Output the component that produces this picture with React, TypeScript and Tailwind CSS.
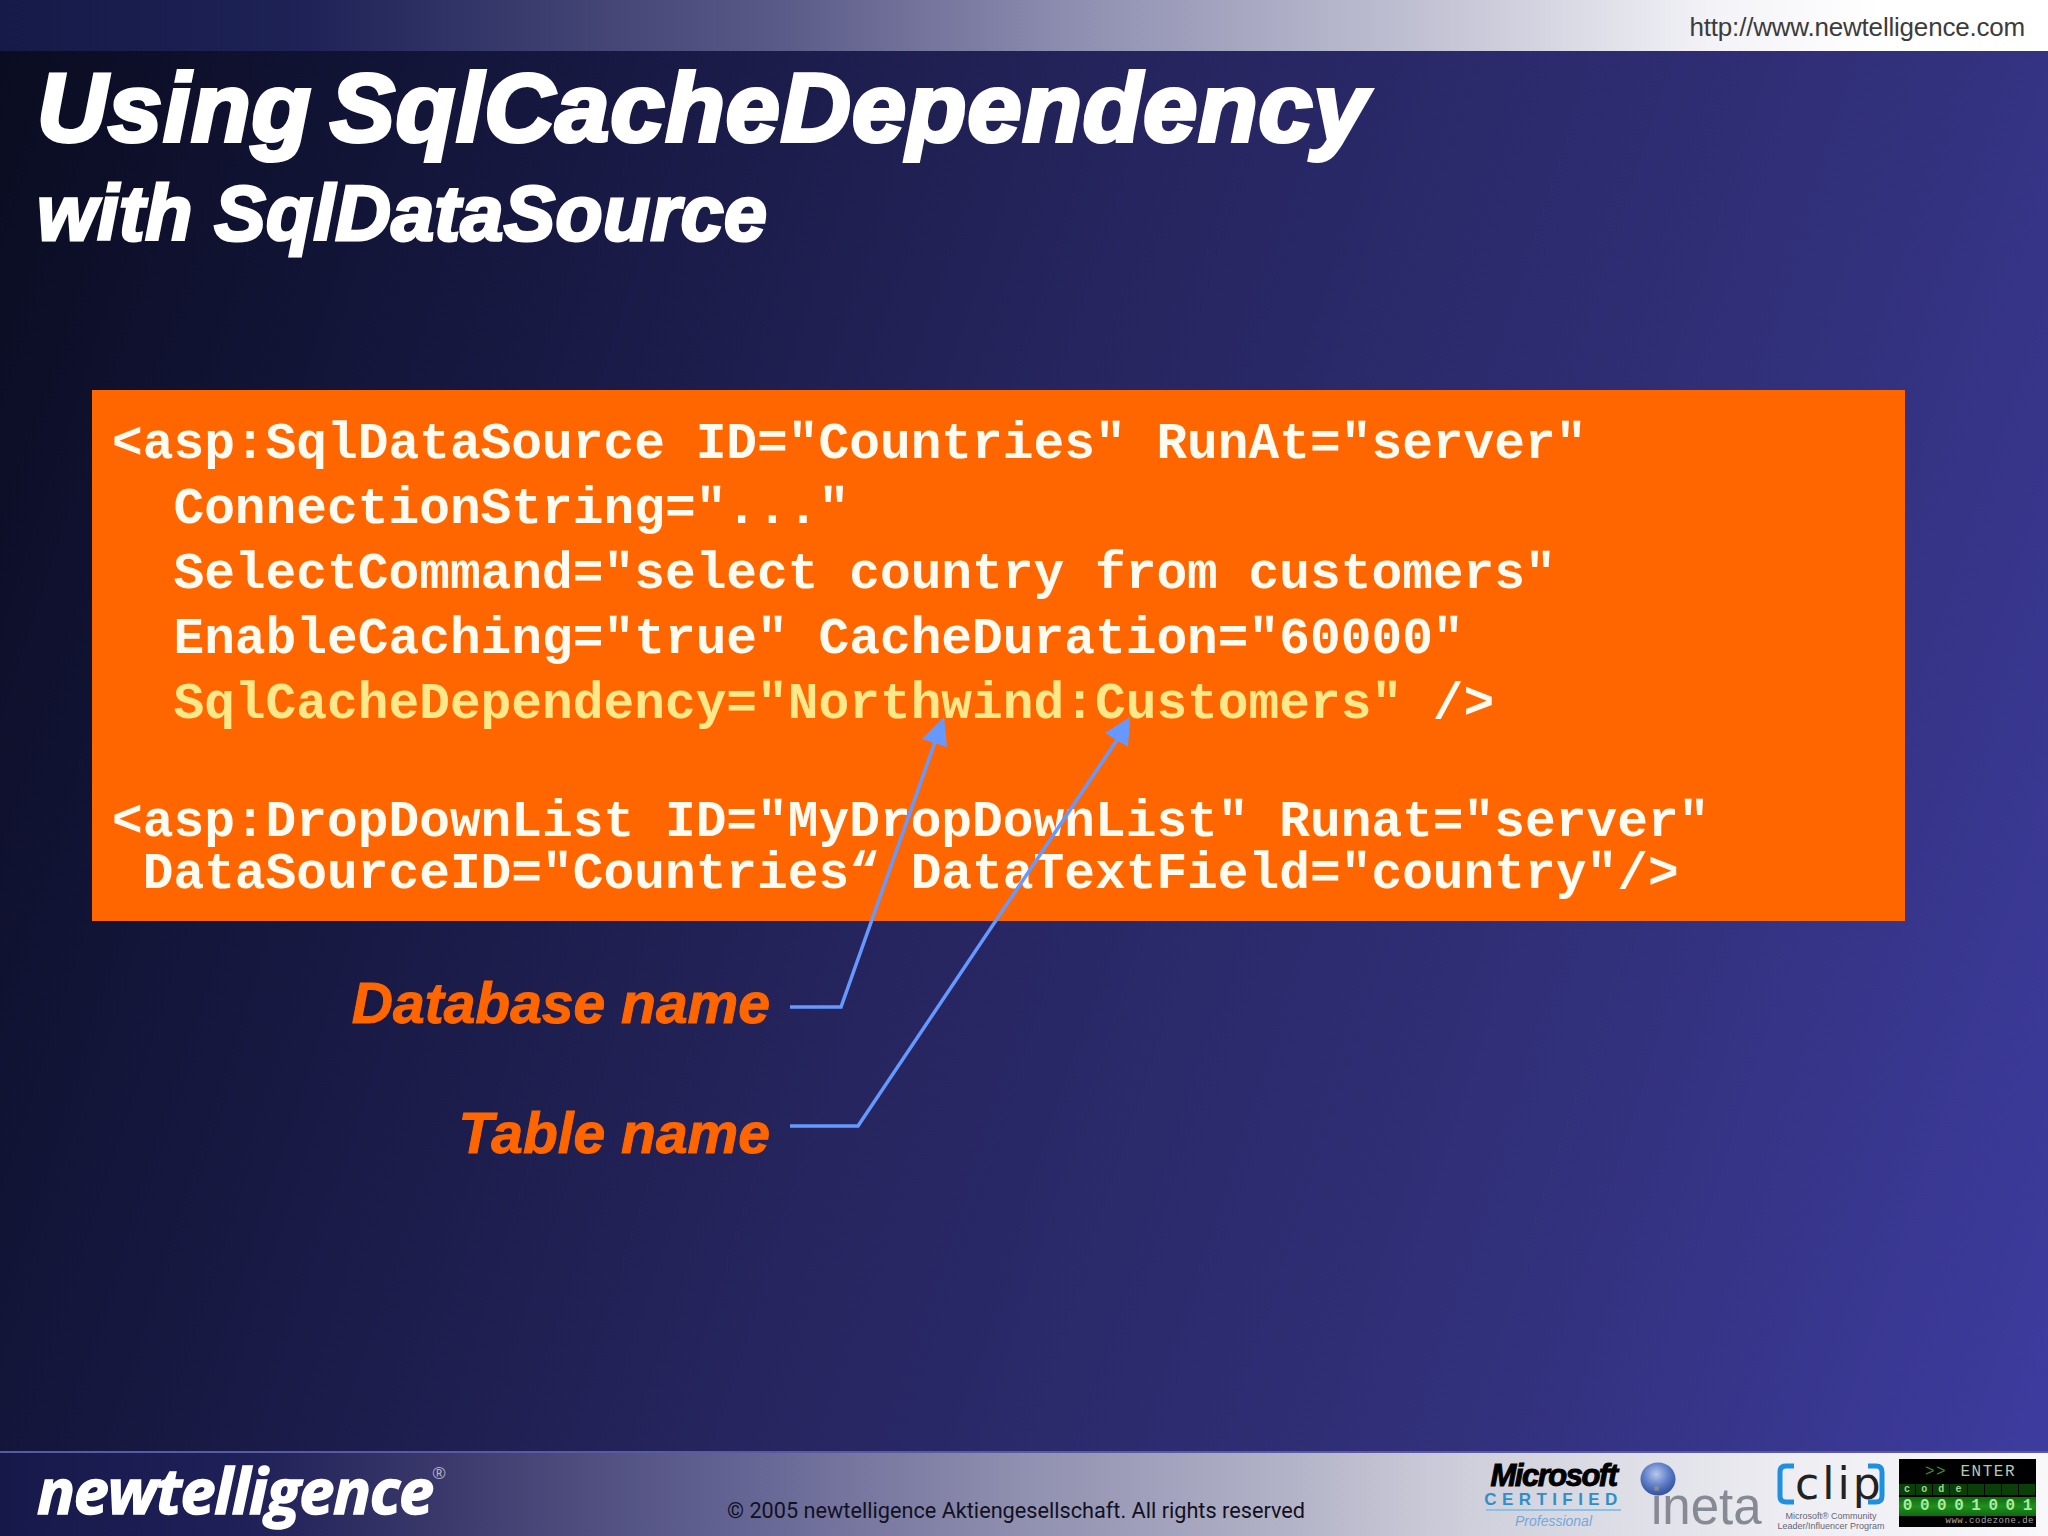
import React from "react";

const sans = "font-['Liberation_Sans',Arial,sans-serif]";

const codeTop = [
  { text: '<asp:SqlDataSource ID="Countries" RunAt="server"', cls: "text-[#fffbf0]" },
  { text: '  ConnectionString="..."', cls: "text-[#fffbf0]" },
  { text: '  SelectCommand="select country from customers"', cls: "text-[#fffbf0]" },
  { text: '  EnableCaching="true" CacheDuration="60000"', cls: "text-[#fffbf0]" },
];

const bits = ["0", "0", "0", "0", "1", "0", "0", "1"];
const code = ["c", "o", "d", "e", "", "", "", ""];

const CodeZone = () => (
  <div className="w-[137px] h-[68px] bg-black flex flex-col font-['Liberation_Mono',monospace] mt-[6px] ml-[13px]">
    <div className="h-[25px] flex items-center justify-between pl-[26px] pr-[20px] text-[16px] leading-none tracking-[1.5px] text-[#b8c8b0]">
      <span className="text-[#3f8f2a]">&gt;&gt;</span>
      <span>ENTER</span>
    </div>
    <div className="grid grid-cols-8 h-[11px] bg-[#0a3f0a] text-[10px] leading-[11px] font-bold text-center text-[#9ad890]">
      {code.map((c, i) => (
        <span key={i} className="border-r border-black">{c}</span>
      ))}
    </div>
    <div className="grid grid-cols-8 h-[19px] mt-[2px] bg-[linear-gradient(180deg,#0f6a0f,#1f8f1f_50%,#0f6a0f)] text-[16px] leading-[19px] font-bold text-center text-[#a8eca0]">
      {bits.map((c, i) => (
        <span key={i}>{c}</span>
      ))}
    </div>
    <div className="flex-1 flex items-center justify-end pr-[2px] text-[9px] leading-none tracking-[0.5px] text-[#a8a8a8]">www.codezone.de</div>
  </div>
);

const App = () => {
  return (
    <div className={`relative w-[2048px] h-[1536px] overflow-hidden flex flex-col ${sans} bg-[linear-gradient(108deg,#0a0c20_0%,#14163c_20%,#26255f_47%,#31307a_75%,#3e3ca0_100%)]`}>
      {/* top bar */}
      <div className="h-[51px] shrink-0 flex justify-end bg-[linear-gradient(90deg,#151a48_0%,#1e2256_15%,#5a5a88_38%,#8d8db0_52%,#c9c9d9_72%,#f4f4f8_84%,#ffffff_92%)]">
        <span className="mr-[23px] pt-[2px] text-[26px] leading-[51px] tracking-[-0.2px] text-[#3c3c3c]">http://www.newtelligence.com</span>
      </div>

      {/* title */}
      <div className="pl-[37px] pt-[12px] h-[339px] shrink-0 text-white italic font-bold">
        <div className="text-[97px] leading-[90px] tracking-[1.1px] [word-spacing:-10px] [-webkit-text-stroke:4px_white] whitespace-nowrap">Using SqlCacheDependency</div>
        <div className="text-[77px] leading-[80px] mt-[20px] tracking-[0.4px] [-webkit-text-stroke:3px_white] whitespace-nowrap">with SqlDataSource</div>
      </div>

      {/* code box */}
      <div className="ml-[92px] w-[1813px] h-[531px] shrink-0 bg-[#ff6600] pl-[20px] pt-[22px] font-['Liberation_Mono',monospace] font-bold text-[51.2px] whitespace-pre">
        {codeTop.map((l) => (
          <div key={l.text} className={`h-[65px] leading-[65px] ${l.cls}`}>{l.text}</div>
        ))}
        <div className="h-[65px] leading-[65px] text-[#ffe88a]">
          {'  SqlCacheDependency="Northwind:Customers"'} <span className="text-[#fffbf0]">/&gt;</span>
        </div>
        <div className="h-[52px] mt-[59px] leading-[52px] text-[#fffbf0]">{'<asp:DropDownList ID="MyDropDownList" Runat="server"'}</div>
        <div className="h-[52px] leading-[52px] text-[#fffbf0]">{' DataSourceID="Countries“ DataTextField="country"/>'}</div>
      </div>

      {/* callout labels */}
      <div className="w-[770px] pt-[50px] text-right italic font-bold text-[57px] leading-[64px] text-[#ff6600] shrink-0 [-webkit-text-stroke:1px_#ff6600]">
        <div>Database name</div>
        <div className="mt-[66px]">Table name</div>
      </div>

      {/* footer */}
      <div className="mt-auto h-[85px] shrink-0 flex border-t-2 border-t-[#5a5aa4] bg-[linear-gradient(90deg,#17184a_0%,#1f2058_12%,#3c3a6c_22%,#646494_36%,#9090b0_50%,#b0b0c6_62%,#d0d0dc_72%,#eeeef3_88%,#f8f8fa_100%)]">
        <div className="relative w-[690px] shrink-0 pl-[37px] font-['Open_Sans',sans-serif] font-bold italic text-white text-[63px] leading-[74px] tracking-[-1.3px] [-webkit-text-stroke:1.5px_white]">
          newtelligence
          <span className="absolute left-[432px] top-[11px] text-[17px] leading-none tracking-normal font-normal not-italic text-[#b0b0c4] [-webkit-text-stroke:0]">®</span>
        </div>
        <div className="w-[790px] shrink-0 pl-[37px] pt-[45px] font-['Roboto',sans-serif] text-[21.7px] leading-[26px] text-[#111122] whitespace-nowrap">
          © 2005 newtelligence Aktiengesellschaft. All rights reserved
        </div>

        {/* Microsoft Certified */}
        <div className="w-[135px] shrink-0 ml-[6px] mt-[10px] flex flex-col items-center">
          <span className="text-[31px] leading-[26px] font-bold italic tracking-[-1.5px] text-black [-webkit-text-stroke:1px_black]">Microsoft</span>
          <span className="mt-[3px] text-[17px] leading-[16px] font-bold tracking-[5.4px] text-[#2f8fc8] whitespace-nowrap">CERTIFIED</span>
          <span className="w-full h-[2px] mt-[1px] bg-[#8cc0e4]" />
          <span className="mt-[2px] text-[14px] leading-[16px] italic text-[#74a8dc]">Professional</span>
        </div>

        {/* ineta */}
        <div className="relative w-[125px] shrink-0 ml-[19px]">
          <svg className="absolute left-0 top-[9px]" width="36" height="34" viewBox="0 0 36 34">
            <defs>
              <radialGradient id="ball" cx="45%" cy="35%" r="65%">
                <stop offset="0%" stopColor="#b8c8ec" />
                <stop offset="55%" stopColor="#5f7fc8" />
                <stop offset="100%" stopColor="#34509c" />
              </radialGradient>
            </defs>
            <ellipse cx="18" cy="17" rx="17.5" ry="16.5" fill="url(#ball)" />
          </svg>
          <span className="absolute left-[11px] top-[26px] text-[51px] leading-[56px] text-[#858a94]">ineta</span>
        </div>

        {/* clip */}
        <div className="w-[110px] shrink-0 ml-[11px] mt-[10px] flex flex-col items-center">
          <div className="flex items-center h-[42px] w-full justify-center">
            <svg className="shrink-0" width="18" height="42" viewBox="0 0 18 42">
              <path d="M17 3 H9 Q3 3 3 9 V33 Q3 39 9 39 H17" fill="none" stroke="#1f8fe0" strokeWidth="5" />
            </svg>
            <span className="w-[72px] text-center font-['DejaVu_Sans',sans-serif] text-[44px] leading-[42px] tracking-[3px] text-[#222222]">clip</span>
            <svg className="shrink-0" width="18" height="42" viewBox="0 0 18 42">
              <path d="M1 3 H9 Q15 3 15 9 V33 Q15 39 9 39 H1" fill="none" stroke="#1f8fe0" strokeWidth="5" />
            </svg>
          </div>
          <span className="mt-[6px] text-[9px] leading-[10px] text-[#666677] whitespace-nowrap">Microsoft® Community</span>
          <span className="text-[9px] leading-[10px] text-[#666677] whitespace-nowrap">Leader/Influencer Program</span>
        </div>

        <CodeZone />
      </div>

      {/* arrows over the code box */}
      <svg className="absolute inset-0 pointer-events-none" width="2048" height="1536" viewBox="0 0 2048 1536">
        <polyline points="790,1007 841,1007 935,742" fill="none" stroke="#6699ff" strokeWidth="3.5" />
        <polygon points="944,717 922,739 947,747" fill="#6699ff" />
        <polyline points="790,1126 858,1126 1117,740" fill="none" stroke="#6699ff" strokeWidth="3.5" />
        <polygon points="1130,717 1105,733 1128,747" fill="#6699ff" />
      </svg>
    </div>
  );
};

export default App;
